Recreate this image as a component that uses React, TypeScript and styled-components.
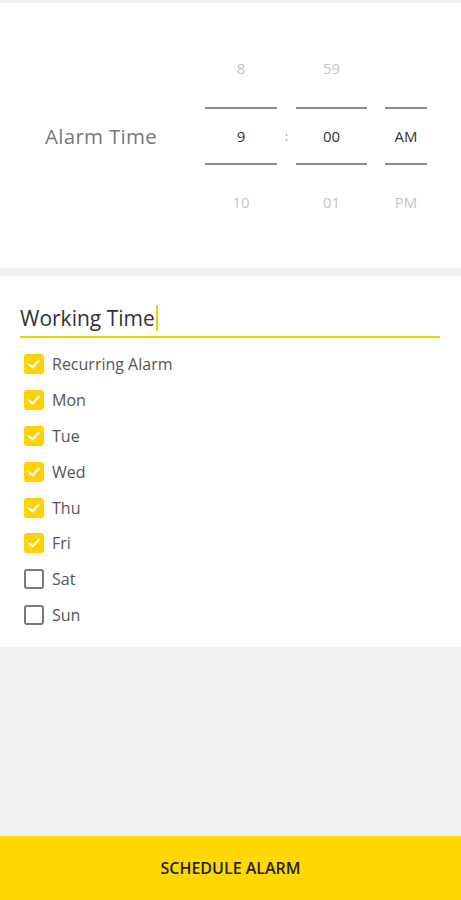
import React, { useState } from 'react'
import styled, { createGlobalStyle } from "styled-components";

const GlobalStyle = createGlobalStyle`
    body {
        margin: 0;
        background: #f0f0f0;
        font-family: "Open Sans", Roboto, sans-serif;
    }
`;

const Screen = styled.div`
    display: flex;
    flex-direction: column;
    min-height: 100vh;
    padding-top: 3px;
    box-sizing: border-box;
`;

const TimePanel = styled.div`
    background: white;
    height: 265px;
    display: flex;
    align-items: center;
    padding-left: 45px;
`;

const TimeLabel = styled.div`
    font-size: 20.5px;
    color: #777;
    width: 160px;
    letter-spacing: 0.3px;
`;

const Wheel = styled.div`
    display: flex;
    flex-direction: column;
    width: ${(props: { width: number }) => props.width}px;
`;

const Cell = styled.div<{ below?: boolean }>`
    height: 78px;
    box-sizing: border-box;
    padding-bottom: ${(props) => props.below ? "4px" : "0"};
    display: flex;
    align-items: center;
    justify-content: center;
    font-size: 15px;
    color: #c4c4c4;
`;

const SelectedCell = styled.div`
    height: 58px;
    box-sizing: border-box;
    border-top: 2px solid #8a8a8a;
    border-bottom: 2px solid #8a8a8a;
    display: flex;
    align-items: center;
    justify-content: center;
    font-size: 15px;
    color: #333;
`;

const Colon = styled.div`
    width: 19px;
    text-align: center;
    font-size: 13px;
    color: #888;
`;

const Spacer = styled.div`
    width: 18px;
`;

const SettingsPanel = styled.div`
    background: white;
    margin-top: 8px;
    padding: 28px 21px 14px 20px;
`;

const NameField = styled.div`
    height: 28px;
    padding-bottom: 4px;
    border-bottom: 2px solid #f5cf00;
    display: flex;
    align-items: center;
    font-size: 21px;
    color: #333;
`;

const Caret = styled.span`
    display: inline-block;
    width: 2px;
    height: 26px;
    background: #f5cf00;
    margin-left: 1px;
`;

const CheckList = styled.div`
    margin-top: 8px;
    display: flex;
    flex-direction: column;
`;

const CheckRow = styled.label`
    height: 35.9px;
    display: flex;
    align-items: center;
    padding-left: 4px;
    gap: 8px;
    font-size: 16px;
    color: #555;
    cursor: pointer;
`;

const Box = styled.span<{ checked: boolean }>`
    width: 20px;
    height: 20px;
    box-sizing: border-box;
    border-radius: 3px;
    display: flex;
    align-items: center;
    justify-content: center;
    background: ${(props) => props.checked ? "#ffd200" : "white"};
    border: ${(props) => props.checked ? "none" : "2px solid #7a7a7a"};
`;

const ScheduleButton = styled.button`
    margin-top: auto;
    height: 64px;
    border: none;
    background: #ffd800;
    font-family: "Open Sans", Roboto, sans-serif;
    font-size: 16px;
    font-weight: 600;
    color: #1e1e1e;
`;

const Check = () => (
    <svg width="14" height="14" viewBox="0 0 14 14">
        <path d="M2 7.2 L5.5 10.5 L12 3.5" fill="none" stroke="white" strokeWidth="2" strokeLinecap="round" strokeLinejoin="round" />
    </svg>
)

const initialDays = [
    { label: "Recurring Alarm", checked: true },
    { label: "Mon", checked: true },
    { label: "Tue", checked: true },
    { label: "Wed", checked: true },
    { label: "Thu", checked: true },
    { label: "Fri", checked: true },
    { label: "Sat", checked: false },
    { label: "Sun", checked: false },
];

export default function App() {
    const [items, setItems] = useState(initialDays);

    const toggle = (i: number) => {
        setItems(items.map((item, idx) => idx === i ? { ...item, checked: !item.checked } : item));
    }

    return (
        <Screen>
            <GlobalStyle />
            <TimePanel>
                <TimeLabel>Alarm Time</TimeLabel>
                <Wheel width={72}>
                    <Cell>8</Cell>
                    <SelectedCell>9</SelectedCell>
                    <Cell below>10</Cell>
                </Wheel>
                <Colon>:</Colon>
                <Wheel width={71}>
                    <Cell>59</Cell>
                    <SelectedCell>00</SelectedCell>
                    <Cell below>01</Cell>
                </Wheel>
                <Spacer />
                <Wheel width={42}>
                    <Cell></Cell>
                    <SelectedCell>AM</SelectedCell>
                    <Cell below>PM</Cell>
                </Wheel>
            </TimePanel>

            <SettingsPanel>
                <NameField>
                    Working Time<Caret />
                </NameField>
                <CheckList>
                    {items.map((item, i) => (
                        <CheckRow key={item.label} onClick={() => toggle(i)}>
                            <Box checked={item.checked}>{item.checked && <Check />}</Box>
                            {item.label}
                        </CheckRow>
                    ))}
                </CheckList>
            </SettingsPanel>

            <ScheduleButton>SCHEDULE ALARM</ScheduleButton>
        </Screen>
    )
}
